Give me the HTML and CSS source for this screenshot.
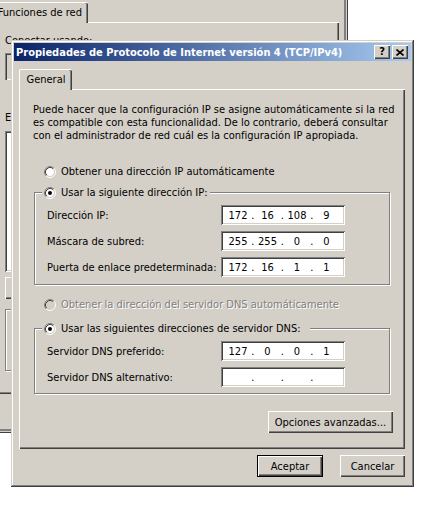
FILE: index.html
```html
<!DOCTYPE html>
<html lang="es">
<head>
<meta charset="utf-8">
<title>Propiedades de Protocolo de Internet versión 4 (TCP/IPv4)</title>
<link rel="stylesheet" href="styles.css">
</head>
<body>
<div class="bgwin">
  <div class="bg-tabs"><div class="bg-tab">Funciones de red</div></div>
  <div class="bg-panel">
    <div class="bg-label">Conectar usando:</div>
    <div class="bg-adapter"></div>
    <div class="bg-label bg-label-2">Esta conexión usa los siguientes elementos:</div>
    <div class="bg-list"></div>
    <div class="bg-btn"></div>
    <div class="bg-group"></div>
  </div>
</div>

<div class="dlg">
  <div class="titlebar">
    <span class="title">Propiedades de Protocolo de Internet versión 4 (TCP/IPv4)</span>
    <div class="tbtns">
      <div class="tbtn tbtn-help">?</div>
      <div class="tbtn"><svg width="8" height="7" viewBox="0 0 8 7"><path d="M0.5 0.5L7.5 6.5M7.5 0.5L0.5 6.5" stroke="#000" stroke-width="1.6" fill="none"/></svg></div>
    </div>
  </div>
  <div class="dlg-body">
    <div class="tabs"><div class="tab">General</div></div>
    <div class="panel">
      <p class="desc">Puede hacer que la configuración IP se asigne automáticamente si la red<br>es compatible con esta funcionalidad. De lo contrario, deberá consultar<br>con el administrador de red cuál es la configuración IP apropiada.</p>

      <div class="radio radio-first">
        <svg class="rb" width="12" height="12" viewBox="0 0 12 12"><path d="M2.11 9.89A5.5 5.5 0 0 1 9.89 2.11" fill="none" stroke="#808080"/><path d="M9.89 2.11A5.5 5.5 0 0 1 2.11 9.89" fill="none" stroke="#fff"/><circle cx="6" cy="6" r="4" fill="#fff"/><path d="M2.82 9.18A4.5 4.5 0 0 1 9.18 2.82" fill="none" stroke="#404040"/><path d="M9.18 2.82A4.5 4.5 0 0 1 2.82 9.18" fill="none" stroke="#d4d0c8"/></svg>
        <span>Obtener una dirección IP automáticamente</span>
      </div>

      <fieldset class="group group-ip">
        <legend class="radio">
          <svg class="rb" width="12" height="12" viewBox="0 0 12 12"><path d="M2.11 9.89A5.5 5.5 0 0 1 9.89 2.11" fill="none" stroke="#808080"/><path d="M9.89 2.11A5.5 5.5 0 0 1 2.11 9.89" fill="none" stroke="#fff"/><circle cx="6" cy="6" r="4" fill="#fff"/><path d="M2.82 9.18A4.5 4.5 0 0 1 9.18 2.82" fill="none" stroke="#404040"/><path d="M9.18 2.82A4.5 4.5 0 0 1 2.82 9.18" fill="none" stroke="#d4d0c8"/><circle cx="6" cy="6" r="2" fill="#000"/></svg>
          <span>Usar la siguiente dirección IP:</span>
        </legend>
        <div class="row"><span class="lbl">Dirección IP:</span><div class="ip"><span class="seg">172</span><span class="dot">.</span><span class="seg">16</span><span class="dot">.</span><span class="seg">108</span><span class="dot">.</span><span class="seg">9</span></div></div>
        <div class="row"><span class="lbl">Máscara de subred:</span><div class="ip"><span class="seg">255</span><span class="dot">.</span><span class="seg">255</span><span class="dot">.</span><span class="seg">0</span><span class="dot">.</span><span class="seg">0</span></div></div>
        <div class="row"><span class="lbl">Puerta de enlace predeterminada:</span><div class="ip"><span class="seg">172</span><span class="dot">.</span><span class="seg">16</span><span class="dot">.</span><span class="seg">1</span><span class="dot">.</span><span class="seg">1</span></div></div>
      </fieldset>

      <div class="radio radio-disabled">
        <svg class="rb" width="12" height="12" viewBox="0 0 12 12"><path d="M2.11 9.89A5.5 5.5 0 0 1 9.89 2.11" fill="none" stroke="#808080"/><path d="M9.89 2.11A5.5 5.5 0 0 1 2.11 9.89" fill="none" stroke="#fff"/><circle cx="6" cy="6" r="4" fill="#d4d0c8"/><path d="M2.82 9.18A4.5 4.5 0 0 1 9.18 2.82" fill="none" stroke="#404040"/><path d="M9.18 2.82A4.5 4.5 0 0 1 2.82 9.18" fill="none" stroke="#d4d0c8"/></svg>
        <span>Obtener la dirección del servidor DNS automáticamente</span>
      </div>

      <fieldset class="group group-dns">
        <legend class="radio legend-dns">
          <svg class="rb" width="12" height="12" viewBox="0 0 12 12"><path d="M2.11 9.89A5.5 5.5 0 0 1 9.89 2.11" fill="none" stroke="#808080"/><path d="M9.89 2.11A5.5 5.5 0 0 1 2.11 9.89" fill="none" stroke="#fff"/><circle cx="6" cy="6" r="4" fill="#fff"/><path d="M2.82 9.18A4.5 4.5 0 0 1 9.18 2.82" fill="none" stroke="#404040"/><path d="M9.18 2.82A4.5 4.5 0 0 1 2.82 9.18" fill="none" stroke="#d4d0c8"/><circle cx="6" cy="6" r="2" fill="#000"/></svg>
          <span>Usar las siguientes direcciones de servidor DNS:</span>
        </legend>
        <div class="row"><span class="lbl">Servidor DNS preferido:</span><div class="ip"><span class="seg">127</span><span class="dot">.</span><span class="seg">0</span><span class="dot">.</span><span class="seg">0</span><span class="dot">.</span><span class="seg">1</span></div></div>
        <div class="row"><span class="lbl">Servidor DNS alternativo:</span><div class="ip"><span class="seg"></span><span class="dot">.</span><span class="seg"></span><span class="dot">.</span><span class="seg"></span><span class="dot">.</span><span class="seg"></span></div></div>
      </fieldset>

      <div class="adv-row"><div class="btn btn-adv">Opciones avanzadas...</div></div>
    </div>
    <div class="footer">
      <div class="btn btn-ok">Aceptar</div>
      <div class="btn btn-cancel">Cancelar</div>
    </div>
  </div>
</div>
</body>
</html>
```

FILE: styles.css
```css
* { box-sizing: border-box; }

body {
  margin: 0;
  width: 434px;
  height: 512px;
  overflow: hidden;
  position: relative;
  background: #fff;
  color: #000;
  font-family: "DejaVu Sans Condensed", "DejaVu Sans", sans-serif;
  font-stretch: condensed;
  font-size: 11px;
  line-height: 13px;
}

/* ---------- background window ---------- */
.bgwin {
  position: absolute;
  left: -8px;
  top: 0;
  width: 356px;
  height: 433px;
  background: #d4d0c8;
  padding: 2px 0 0 4px;
  box-shadow: inset -1px -1px 0 #404040, inset -2px -2px 0 #d4d0c8, inset -4px -4px 0 #808080;
}

.bg-tabs { display: flex; }

.bg-tab {
  position: relative;
  z-index: 1;
  width: 92px;
  height: 21px;
  margin-bottom: -1px;
  padding: 3px 6px 0 0;
  text-align: right;
  white-space: nowrap;
  background: #d4d0c8;
  border-top: 1px solid #fff;
  border-radius: 0 2px 0 0;
  box-shadow: inset -1px 0 0 #404040, inset -2px 0 0 #808080;
}

.bg-panel {
  width: 343px;
  height: 372px;
  border-top: 1px solid #fff;
  border-left: 1px solid #fff;
  box-shadow: inset -1px -1px 0 #404040, inset -2px -2px 0 #808080;
  padding: 11px 0 0 8px;
}

.bg-label { white-space: nowrap; }
.bg-label-2 { margin-top: 31px; }

.bg-adapter {
  margin-top: 6px;
  width: 300px;
  height: 27px;
  box-shadow: inset 1px 1px 0 #808080, inset 2px 2px 0 #404040, inset -1px -1px 0 #fff;
}

.bg-list {
  margin-top: 7px;
  width: 300px;
  height: 141px;
  background: #fff;
  box-shadow: inset 1px 1px 0 #808080, inset -1px -1px 0 #fff, inset 2px 2px 0 #404040, inset -2px -2px 0 #d4d0c8;
}

.bg-btn {
  margin-top: 5px;
  width: 75px;
  height: 22px;
  box-shadow: inset 1px 1px 0 #fff, inset -1px -1px 0 #404040, inset -2px -2px 0 #808080;
}

.bg-group {
  margin-top: 10px;
  width: 300px;
  height: 62px;
  border: 1px solid #808080;
  box-shadow: 1px 1px 0 #fff, inset 1px 1px 0 #fff;
}

/* ---------- dialog ---------- */
.dlg {
  position: absolute;
  left: 11px;
  top: 40px;
  width: 403px;
  height: 447px;
  background: #d4d0c8;
  padding: 3px;
  box-shadow: inset -1px -1px 0 #404040, inset 1px 1px 0 #d4d0c8, inset -2px -2px 0 #808080, inset 2px 2px 0 #fff;
}

.titlebar {
  height: 18px;
  display: flex;
  align-items: center;
  padding: 0 3px 0 2px;
  background: linear-gradient(to right, #0a246a, #a6caf0);
  color: #fff;
  font-weight: bold;
}

.title { flex: 1; white-space: nowrap; overflow: hidden; }

.tbtns { display: flex; gap: 2px; }

.tbtn {
  width: 16px;
  height: 14px;
  display: flex;
  align-items: center;
  justify-content: center;
  background: #d4d0c8;
  color: #000;
  font-weight: bold;
  box-shadow: inset 1px 1px 0 #fff, inset -1px -1px 0 #404040, inset -2px -2px 0 #808080;
}

.tbtn-help { padding-bottom: 1px; }

.dlg-body { padding: 8px 0 0 5px; }

.tabs { display: flex; }

.tab {
  position: relative;
  z-index: 1;
  width: 53px;
  height: 21px;
  margin-bottom: -1px;
  padding-top: 3px;
  text-align: center;
  background: #d4d0c8;
  border-top: 1px solid #fff;
  border-left: 1px solid #fff;
  border-radius: 2px 2px 0 0;
  box-shadow: inset -1px 0 0 #404040, inset -2px 0 0 #808080;
}

.panel {
  width: 386px;
  height: 360px;
  border-top: 1px solid #fff;
  border-left: 1px solid #fff;
  box-shadow: inset -1px -1px 0 #404040, inset -2px -2px 0 #808080;
  padding: 13px 12px 0 13px;
}

.desc { margin: 0; white-space: nowrap; }

.radio {
  display: flex;
  align-items: center;
  gap: 5px;
  height: 13px;
  white-space: nowrap;
}

.rb { flex: none; display: block; }

.radio-first { margin-top: 23px; padding-left: 11px; }

.radio-disabled {
  margin-top: 13px;
  padding-left: 11px;
  color: #808080;
}
.radio-disabled span { text-shadow: 1px 1px 0 #fff; }

.group {
  margin: 8px 0 0 1px;
  width: 356px;
  min-width: 0;
  padding: 6px 12px 7px 12px;
  border: 1px solid #808080;
  box-shadow: 1px 1px 0 #fff, inset 1px 1px 0 #fff;
}

.group-dns { margin-top: 11px; padding-bottom: 6px; }

.group legend {
  margin-left: -5px;
  padding: 0 2px;
  background: #d4d0c8;
}

.group .legend-dns { padding-right: 9px; }

.row {
  display: flex;
  align-items: center;
  height: 20px;
}
.row + .row { margin-top: 6px; }

.lbl { width: 174px; white-space: nowrap; }

.ip {
  width: 124px;
  height: 20px;
  display: flex;
  align-items: center;
  padding: 0 0 0 4px;
  background: #fff;
  box-shadow: inset 1px 1px 0 #808080, inset -1px -1px 0 #fff, inset 2px 2px 0 #404040, inset -2px -2px 0 #d4d0c8;
}

.seg { width: 26px; text-align: center; }
.dot { width: 3.5px; display: flex; justify-content: center; }

.adv-row {
  display: flex;
  justify-content: flex-end;
  margin-top: 17px;
}

.btn {
  height: 22px;
  display: flex;
  align-items: center;
  justify-content: center;
  white-space: nowrap;
  background: #d4d0c8;
  box-shadow: inset 1px 1px 0 #fff, inset -1px -1px 0 #404040, inset -2px -2px 0 #808080;
}

.btn-adv { width: 125px; }

.footer {
  width: 386px;
  display: flex;
  justify-content: flex-end;
  gap: 17px;
  margin-top: 6px;
}

.btn-ok { width: 66px; border: 1px solid #000; }
.btn-cancel { width: 65px; }
```
